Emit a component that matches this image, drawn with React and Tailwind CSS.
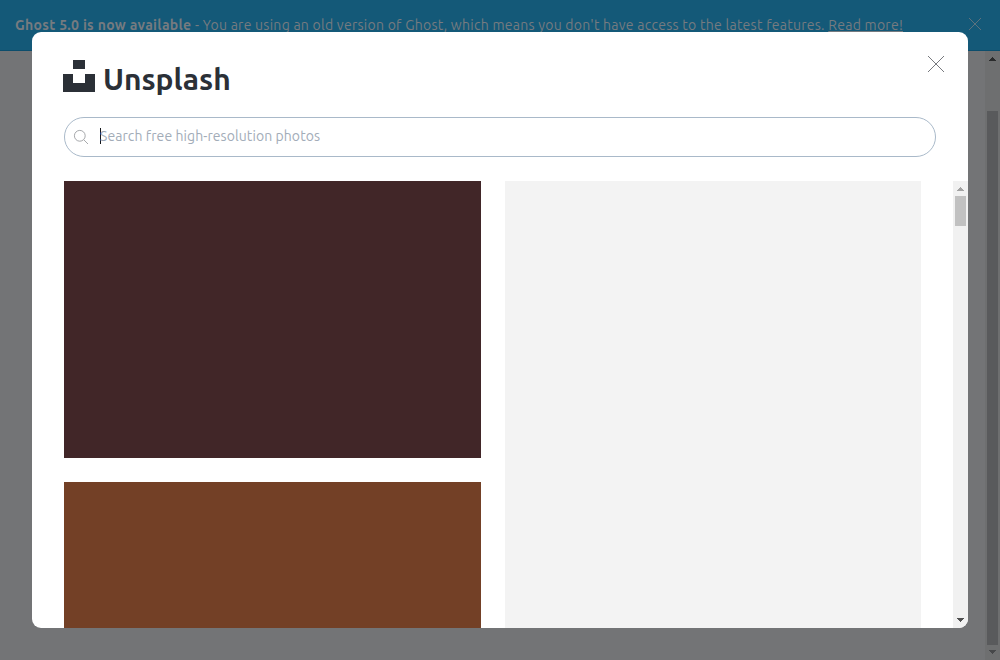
import React from "react";

function Cross({ className }) {
  return (
    <svg viewBox="0 0 16 16" className={className} fill="none" stroke="currentColor">
      <path d="M0 0L16 16M16 0L0 16" />
    </svg>
  );
}

function Arrow({ down, className }) {
  return (
    <svg viewBox="0 0 7 4" className={className} fill="currentColor" shapeRendering="crispEdges">
      <path d={down ? "M0 0H7V1H6V2H5V3H4V4H3V3H2V2H1V1H0Z" : "M3 0H4V1H5V2H6V3H7V4H0V3H1V2H2V1H3Z"} />
    </svg>
  );
}

function Banner() {
  return (
    <header className="flex h-[51px] shrink-0 items-start border-b border-[#0c4d6c] bg-[#145978] pl-[15px] pt-[15px] text-[14px] leading-5 tracking-[0.26px] text-[#767b80]">
      <p className="whitespace-nowrap">
        <b className="tracking-[0.31px]">Ghost 5.0 is now available</b> - You are using an old version of Ghost, which
        means you don't have access to the latest features. <a className="underline">Read more!</a>
      </p>
      <Cross className="ml-auto mr-[19px] mt-[3px] size-3 overflow-visible" />
    </header>
  );
}

function PageScrollbar() {
  return (
    <div className="flex w-[15px] flex-col items-center bg-[#6e6f70]">
      <Arrow className="mt-[6px] h-1 w-[7px] text-[#2a2b2c]" />
      <div className="mt-[50px] h-[534px] w-[11px] bg-[#595a5c]" />
      <Arrow down className="mt-[5px] h-1 w-[7px] text-[#47484a]" />
    </div>
  );
}

function Modal() {
  return (
    <section className="absolute left-8 top-8 flex h-[596px] w-[936px] flex-col overflow-hidden rounded-[9px] bg-white">
      <div className="flex h-[85px] shrink-0 items-start pl-[31px] pr-6 pt-7">
        <svg viewBox="0 0 32 32" className="size-8 text-[#2b3037]" fill="currentColor">
          <path d="M10 0H22V9H10ZM0 14H10V23H22V14H32V32H0Z" />
        </svg>
        <h1 className="ml-2 whitespace-nowrap text-[30px] font-bold leading-[39px] tracking-[-0.06px] text-[#2b3037]">
          Unsplash
        </h1>
        <Cross className="ml-auto mt-[-4px] size-4 overflow-visible text-[#77797e]" />
      </div>
      <div className="mx-8 flex h-10 shrink-0 items-center rounded-full border border-[#a9b9c9] pl-[9px]">
        <svg viewBox="0 0 14 14" className="size-[14px] overflow-visible" fill="none" stroke="#a7a9ac">
          <circle cx="5.8" cy="5.8" r="5.4" />
          <path d="M9.7 9.7L14 14" />
        </svg>
        <span className="mb-[2px] ml-3 h-4 w-px bg-[#15171a]" />
        <span className="mb-[2px] ml-[-1px] whitespace-nowrap text-[14px] leading-5 tracking-[0.08px] text-[#a2acb8]">
          Search free high-resolution photos
        </span>
      </div>
      <div className="mt-6 flex min-h-0 flex-1">
        <div className="ml-8 flex w-[417px] flex-col gap-6">
          <div className="h-[277px] shrink-0 bg-[#412628]" />
          <div className="flex-1 bg-[#734026]" />
        </div>
        <div className="ml-6 w-[416px] bg-[#f3f3f3]" />
        <div className="ml-auto flex w-[15px] flex-col items-center bg-[#f1f1f1]">
          <Arrow className="mt-[6px] h-1 w-[7px] text-[#a3a3a3]" />
          <div className="mt-[5px] h-[30px] w-[11px] bg-[#c1c1c1]" />
          <Arrow down className="mb-[6px] mt-auto h-1 w-[7px] text-[#505050]" />
        </div>
      </div>
    </section>
  );
}

export default function App() {
  return (
    <div className="relative flex h-[660px] w-[1000px] flex-col overflow-hidden bg-[#737476] font-['Ubuntu','Noto_Sans',sans-serif]">
      <Banner />
      <div className="flex flex-1 justify-end">
        <PageScrollbar />
      </div>
      <Modal />
    </div>
  );
}
